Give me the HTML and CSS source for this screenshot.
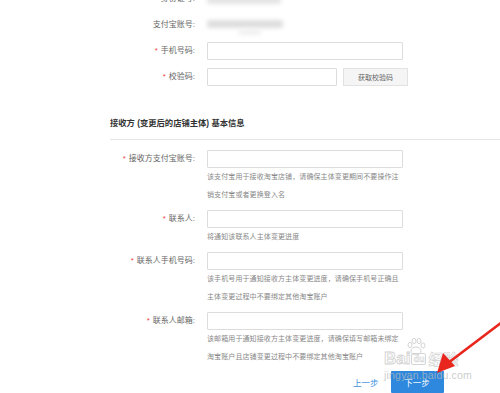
FILE: index.html
```html
<!DOCTYPE html>
<html lang="zh-CN">
<head>
  <meta charset="UTF-8" />
  <title>店铺主体变更</title>
  <link rel="stylesheet" href="styles.css">
</head>
<body>

<div class="page">

  <div class="form-top">
    <div class="row">
      <span class="lbl">身份证号:</span>
      <div class="masked masked-id"></div>
    </div>
    <div class="row">
      <span class="lbl">支付宝账号:</span>
      <div class="masked masked-alipay"><span class="masked-tail"></span></div>
    </div>
    <div class="row">
      <span class="lbl"><i class="req">*</i>手机号码:</span>
      <div class="field"><input class="ipt" type="text"></div>
    </div>
    <div class="row">
      <span class="lbl"><i class="req">*</i>校验码:</span>
      <div class="field">
        <input class="ipt ipt-short" type="text">
        <button class="btn-code">获取校验码</button>
      </div>
    </div>
  </div>

  <h3 class="section-title">接收方 (变更后的店铺主体) 基本信息</h3>

  <div class="form-receiver">
    <div class="row">
      <span class="lbl"><i class="req">*</i>接收方支付宝账号:</span>
      <div class="field-col">
        <input class="ipt" type="text">
        <p class="help">该支付宝用于接收淘宝店铺，请确保主体变更期间不要操作注<br>销支付宝或者更换登入名</p>
      </div>
    </div>
    <div class="row">
      <span class="lbl"><i class="req">*</i>联系人:</span>
      <div class="field-col">
        <input class="ipt" type="text">
        <p class="help">将通知该联系人主体变更进度</p>
      </div>
    </div>
    <div class="row">
      <span class="lbl"><i class="req">*</i>联系人手机号码:</span>
      <div class="field-col">
        <input class="ipt" type="text">
        <p class="help">该手机号用于通知接收方主体变更进度，请确保手机号正确且<br>主体变更过程中不要绑定其他淘宝账户</p>
      </div>
    </div>
    <div class="row">
      <span class="lbl"><i class="req">*</i>联系人邮箱:</span>
      <div class="field-col">
        <input class="ipt" type="text">
        <p class="help">该邮箱用于通知接收方主体变更进度，请确保填写邮箱未绑定<br>淘宝账户且店铺变更过程中不要绑定其他淘宝账户</p>
      </div>
    </div>
  </div>

  <div class="actions">
    <a class="link-prev" href="#">上一步</a>
    <button class="btn-next">下一步</button>
  </div>

</div>

<!-- watermark + annotation arrow drawn over the screenshot -->
<div class="watermark">
  <div class="wm-logo">
    <span class="wm-bai">Bai</span><span class="wm-du">du</span><span class="wm-jy">经验</span>
    <svg class="wm-paw" width="20" height="18" viewBox="0 0 20 18">
      <ellipse cx="10" cy="13" rx="5" ry="4" fill="none" stroke="#d4d4d4" stroke-width="1"/>
      <ellipse cx="4" cy="7" rx="2" ry="2.6" fill="none" stroke="#d4d4d4" stroke-width="1"/>
      <ellipse cx="8" cy="3" rx="2" ry="2.6" fill="none" stroke="#d4d4d4" stroke-width="1"/>
      <ellipse cx="13" cy="3" rx="2" ry="2.6" fill="none" stroke="#d4d4d4" stroke-width="1"/>
      <ellipse cx="17" cy="7.5" rx="2" ry="2.6" fill="none" stroke="#d4d4d4" stroke-width="1"/>
    </svg>
  </div>
  <div class="wm-url">jingyan.baidu.com</div>
</div>

<svg class="arrow" width="70" height="60" viewBox="0 0 70 60">
  <line x1="70" y1="4" x2="12" y2="48" stroke="#e8261e" stroke-width="2.6" stroke-linecap="round"/>
  <polygon points="5,55 11,35 23,48" fill="#e8261e"/>
</svg>

</body>
</html>
```

FILE: styles.css
```css
html, body {
  margin: 0;
  padding: 0;
  overflow: hidden;
  background: #fff;
}

body {
  font-family: "Liberation Sans", "Noto Sans CJK SC", sans-serif;
  color: #666;
  position: relative;
  height: 393px;
}

.page {
  margin-left: 110px;
}

.form-top {
  margin-top: -10px;
  display: flex;
  flex-direction: column;
  gap: 8px;
}

.row {
  display: grid;
  grid-template-columns: 97px 1fr;
  align-items: start;
}

.lbl {
  font-size: 8px;
  line-height: 18px;
  text-align: right;
  padding-right: 12px;
  color: #666;
  white-space: nowrap;
}

.req {
  font-style: normal;
  color: #f0434a;
  margin-right: 3px;
  font-size: 8px;
}

.field {
  display: flex;
  gap: 6px;
  align-items: center;
}

.ipt {
  box-sizing: border-box;
  width: 196px;
  height: 18px;
  margin: 0;
  padding: 0 4px;
  border: 1px solid #dcdcdc;
  border-radius: 1px;
  background: #fff;
  display: block;
}

.ipt-short {
  width: 130px;
}

.btn-code {
  box-sizing: border-box;
  width: 65px;
  height: 18px;
  padding: 0;
  border: 1px solid #e2e2e2;
  background: #f5f5f5;
  color: #666;
  font-family: inherit;
  font-size: 7px;
}

.masked {
  height: 18px;
  position: relative;
}

.masked::before {
  content: "";
  position: absolute;
  left: 0;
  top: 4px;
  width: 76px;
  height: 8px;
  background: #dedede;
  border-radius: 3px;
  filter: blur(2px);
}

.masked-id::before {
  top: 6px;
  width: 74px;
  background: #e4e4e4;
}

.masked-tail {
  position: absolute;
  left: 32px;
  top: 13px;
  width: 22px;
  height: 6px;
  background: #f0f0f0;
  filter: blur(2px);
}

.section-title {
  margin: 29px 0 0;
  padding-bottom: 8px;
  border-bottom: 1px solid #e6e6e6;
  font-size: 8.3px;
  line-height: 16px;
  color: #333;
  font-weight: bold;
}

.form-receiver {
  margin-top: 10px;
  display: flex;
  flex-direction: column;
  gap: 6px;
}

.field-col {
  display: flex;
  flex-direction: column;
}

.help {
  margin: 0;
  font-size: 7px;
  line-height: 18px;
  color: #888;
  letter-spacing: 0.1px;
  white-space: nowrap;
}

.actions {
  display: flex;
  align-items: center;
  gap: 12px;
  padding-left: 243px;
  margin-top: 5px;
}

.link-prev {
  color: #3d8fe0;
  font-size: 8.5px;
  text-decoration: none;
}

.btn-next {
  width: 53px;
  height: 22px;
  padding: 0;
  border: none;
  border-radius: 1px;
  background: #2d88de;
  color: #fff;
  font-family: inherit;
  font-size: 8.5px;
}

.watermark {
  position: absolute;
  left: 384px;
  top: 338px;
  width: 100px;
  pointer-events: none;
}

.wm-logo {
  position: relative;
  display: flex;
  align-items: flex-end;
  height: 30px;
}

.wm-bai {
  font-family: "Liberation Sans", sans-serif;
  font-size: 17px;
  font-weight: bold;
  color: rgba(255, 255, 255, 0.55);
  -webkit-text-stroke: 0.8px #d0d0d0;
  line-height: 18px;
}

.wm-du {
  font-family: "Liberation Sans", sans-serif;
  font-size: 9px;
  font-weight: bold;
  color: rgba(255, 255, 255, 0.6);
  -webkit-text-stroke: 0.5px #d0d0d0;
  border: 1px solid #d4d4d4;
  border-radius: 2px;
  padding: 0 1px;
  line-height: 10px;
  margin: 0 2px 3px 1px;
}

.wm-jy {
  font-family: "Noto Sans CJK SC", sans-serif;
  font-size: 15px;
  font-weight: bold;
  color: rgba(255, 255, 255, 0.55);
  -webkit-text-stroke: 0.6px #d0d0d0;
  line-height: 18px;
}

.wm-paw {
  position: absolute;
  left: 22px;
  top: 0;
}

.wm-url {
  margin-top: 1px;
  font-family: "Liberation Sans", sans-serif;
  font-size: 10.5px;
  color: rgba(185, 185, 185, 0.75);
  letter-spacing: 0.2px;
}

.arrow {
  position: absolute;
  left: 432px;
  top: 318px;
  pointer-events: none;
}
```
